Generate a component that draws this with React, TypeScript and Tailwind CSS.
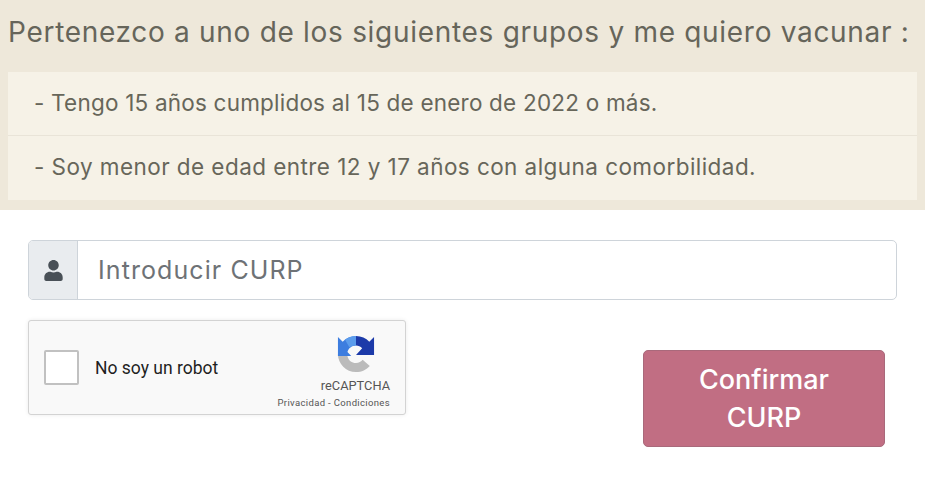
import { FaUser } from 'react-icons/fa';

function RecaptchaLogo() {
  return (
    <svg width="38" height="38" viewBox="0 0 40 40" className="block">
      <path d="M1 22 L1 20 C1 30.500 9.500 39 20 39 C26 39 31 36.500 34.500 32.500 L27 26 C25.500 28 23 29.500 20 29.500 C15.500 29.500 12 26.500 11 22 Z" fill="#bbbbbb" />
      <path d="M1 2 L6 7 C9.500 3.300 14.500 1 20 1 L20 11 C15.500 11 12 14 11 18 L15 22 L1 22 Z" fill="#3d7ddf" />
      <path d="M20 1 C15.500 1 11.500 2.500 8.500 5 L13 13 C14.800 11.800 17.300 11 20 11 Z" fill="#5b9cec" />
      <path d="M20 1 C25.500 1 30.500 3.300 34 7 L39 2 L39 21 L20 21 L26.500 14 C24.800 12 22.500 11 20 11 Z" fill="#1c3aa9" />
    </svg>
  );
}

export default function App() {
  return (
    <div className="w-[925px] h-[498px] bg-white overflow-hidden font-['Inter',sans-serif]">
      <div className="h-[210px] bg-[#eee8da] px-2">
        <h1 className="h-[72px] flex items-center whitespace-nowrap pb-[8px] text-[28px] font-normal text-[#66655a] tracking-[0.7px]">
          Pertenezco a uno de los siguientes grupos y me quiero vacunar :
        </h1>
        <ul className="w-[909px] text-[22.5px] font-normal text-[#67665a]">
          <li className="h-[64px] flex items-center pl-[26px] pb-[2px] bg-[#f6f2e7] border-b border-[#e9e4d8] tracking-[0.21px]">
            - Tengo 15 años cumplidos al 15 de enero de 2022 o más.
          </li>
          <li className="h-[64px] flex items-center pl-[26px] pb-[2px] bg-[#f6f2e7] tracking-[0.44px]">
            - Soy menor de edad entre 12 y 17 años con alguna comorbilidad.
          </li>
        </ul>
      </div>

      <div className="px-[28px] pt-[30px]">
        <div className="w-[869px] h-[60px] flex border border-[#ced4da] rounded-[5px] overflow-hidden">
          <div className="w-[49px] flex items-center justify-center bg-[#e9ecef] border-r border-[#ced4da]">
            <FaUser className="text-[#495057] text-[21px]" />
          </div>
          <div className="flex-1 flex items-center pl-[20px] pt-[2px] text-[25px] text-[#6e7276] tracking-[1.08px]">
            Introducir CURP
          </div>
        </div>

        <div className="flex justify-between items-start mt-[20px] pr-[12px]">
          <div className="w-[378px] h-[95px] flex items-center justify-between bg-[#f9f9f9] border border-[#d3d3d3] rounded-[3px] shadow-[0_0_4px_rgba(0,0,0,0.08)] pl-[15px] pr-[15px]">
            <div className="flex items-center gap-[16px]">
              <div className="w-[35px] h-[35px] bg-white border-2 border-[#c1c1c1] rounded-[2px]" />
              <span className="font-['Roboto',sans-serif] text-[17.5px] text-[#1f1f1f] pt-[1px]">No soy un robot</span>
            </div>
            <div className="flex flex-col items-end font-['Roboto',sans-serif] text-[#555] pt-[8px]">
              <div className="pr-[15px]">
                <RecaptchaLogo />
              </div>
              <span className="text-[12.8px] leading-[14px] mt-[6px]">reCAPTCHA</span>
              <span className="text-[9.5px] leading-[12px] mt-[4px] tracking-[0.35px]">Privacidad - Condiciones</span>
            </div>
          </div>

          <button className="w-[242px] h-[97px] mt-[30px] bg-[#c16e83] border border-[#a9697b] rounded-[5px] text-white text-[27px] font-medium leading-[38px]">
            Confirmar
            <br />
            CURP
          </button>
        </div>
      </div>
    </div>
  );
}
